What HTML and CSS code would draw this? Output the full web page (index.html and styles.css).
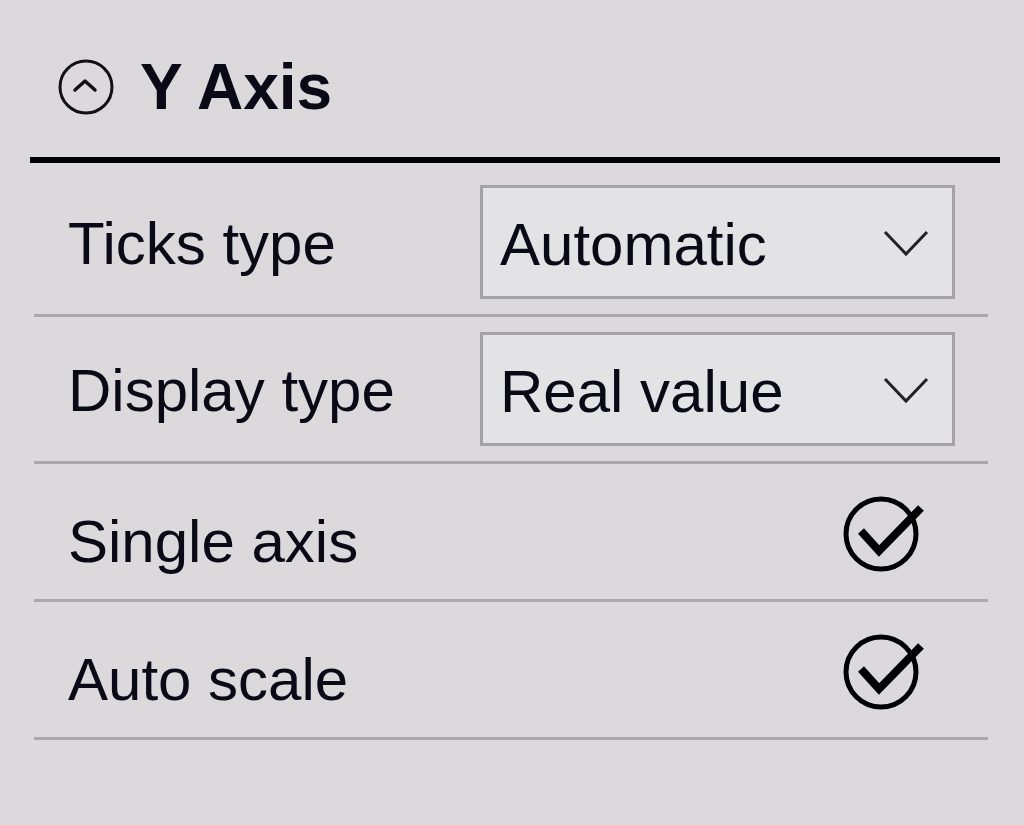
FILE: index.html
```html
<!DOCTYPE html>
<html lang="en">
<head>
  <meta charset="UTF-8" />
  <meta name="viewport" content="width=device-width, initial-scale=1.0" />
  <title>Y Axis</title>
  <link rel="stylesheet" href="styles.css">
</head>
<body>
  <div class="panel">
    <div class="panel-header">
      <svg class="collapse-icon" width="58" height="58" viewBox="0 0 58 58">
        <circle cx="29" cy="29" r="26" fill="none" stroke="#111" stroke-width="3"/>
        <polyline points="18,32 28,23 38,32" fill="none" stroke="#111" stroke-width="3.5" stroke-linecap="round" stroke-linejoin="round"/>
      </svg>
      <h2>Y Axis</h2>
    </div>

    <div class="rows">
      <div class="row row-select">
        <span class="label">Ticks type</span>
        <div class="dropdown">
          <span class="dropdown-value">Automatic</span>
          <svg class="chevron" width="48" height="30" viewBox="0 0 48 30">
            <polyline points="3,4 24,26 45,4" fill="none" stroke="#222" stroke-width="3"/>
          </svg>
        </div>
      </div>

      <div class="row row-select">
        <span class="label">Display type</span>
        <div class="dropdown">
          <span class="dropdown-value">Real value</span>
          <svg class="chevron" width="48" height="30" viewBox="0 0 48 30">
            <polyline points="3,4 24,26 45,4" fill="none" stroke="#222" stroke-width="3"/>
          </svg>
        </div>
      </div>

      <div class="row row-check">
        <span class="label">Single axis</span>
        <svg class="check-icon" width="86" height="82" viewBox="0 0 86 82">
          <circle cx="40" cy="41" r="35" fill="none" stroke="#000" stroke-width="5"/>
          <polyline points="20,38 38,58 80,15" fill="none" stroke="#000" stroke-width="8"/>
        </svg>
      </div>

      <div class="row row-check">
        <span class="label">Auto scale</span>
        <svg class="check-icon" width="86" height="82" viewBox="0 0 86 82">
          <circle cx="40" cy="41" r="35" fill="none" stroke="#000" stroke-width="5"/>
          <polyline points="20,38 38,58 80,15" fill="none" stroke="#000" stroke-width="8"/>
        </svg>
      </div>
    </div>
  </div>
</body>
</html>
```

FILE: styles.css
```css
html, body {
  margin: 0;
  padding: 0;
  background: #dbd9dc;
}

body {
  font-family: "Liberation Sans", Arial, sans-serif;
  color: #0a0a16;
}

.panel {
  width: 970px;
  margin-left: 30px;
}

.panel-header {
  display: flex;
  align-items: flex-start;
  height: 101px;
  padding: 56px 0 0 27px;
  border-bottom: 6px solid #000;
}

.collapse-icon {
  flex: none;
  margin-top: 2px;
}

.panel-header h2 {
  margin: -1px 0 0 25px;
  font-size: 64px;
  font-weight: bold;
  line-height: 1;
}

.rows {
  margin: 0 12px 0 4px;
  padding-top: 7px;
}

.row {
  display: flex;
  align-items: center;
  justify-content: space-between;
  border-bottom: 3px solid #a9a8aa;
}

.row-select {
  padding: 15px 0;
}

.row-check {
  height: 135px;
}

.label {
  font-size: 60px;
  line-height: 1;
  padding-left: 34px;
}

.row-select .label {
  padding-top: 3px;
}

.row-check .label {
  padding-top: 20px;
}

.dropdown {
  display: flex;
  align-items: center;
  justify-content: space-between;
  width: 475px;
  height: 114px;
  margin-right: 33px;
  box-sizing: border-box;
  border: 3px solid #a3a2a4;
  background: #e3e2e4;
  padding: 0 22px 0 17px;
}

.dropdown-value {
  font-size: 60px;
  line-height: 1;
  padding-top: 6px;
}

.chevron {
  flex: none;
  margin-top: 2px;
}

.check-icon {
  flex: none;
  margin-right: 61px;
  margin-top: 4px;
}
```
